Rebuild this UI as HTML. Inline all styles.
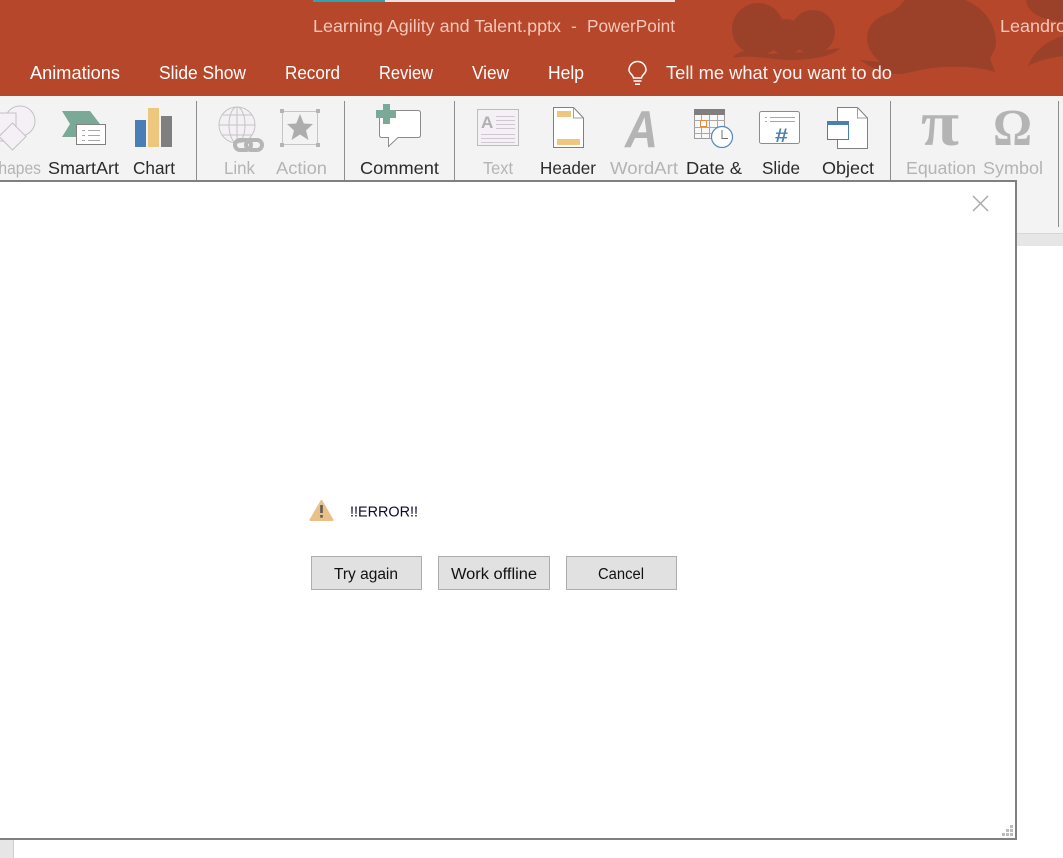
<!DOCTYPE html>
<html><head><meta charset="utf-8"><style>
html,body{margin:0;padding:0;background:#fff;width:1063px;height:858px;overflow:hidden}
svg{display:block;font-family:"Liberation Sans",sans-serif}
.t{font-size:18px;fill:#fff}
.h{font-size:17.5px;fill:#f6c8ba}
.l{font-size:17.5px;fill:#2b2b2b}
.d{font-size:17.5px;fill:#b4b4b4}
.b{font-size:15.5px;fill:#111}
</style></head><body>
<svg width="1063" height="858" viewBox="0 0 1063 858" xmlns="http://www.w3.org/2000/svg">
<rect width="1063" height="858" fill="#fff"/>
<!-- header -->
<rect width="1063" height="96" fill="#b7472a"/>
<g fill="#9b412a">
<circle cx="758" cy="29" r="26"/>
<circle cx="813" cy="32" r="22"/>
<circle cx="786" cy="37" r="18"/>
<path d="M733 58C738 50 748 50 760 53C775 55 790 52 812 52L840 48C835 55 815 60 790 60C770 60 750 54 733 58Z"/>
<path d="M867 38C867 24 878 16 892 12C898 8 902 3 905 0H965C985 8 996 25 996 42C996 50 992 54 990 58L995 72C975 66 950 66 933 68C915 70 905 75 895 74C880 72 868 66 860 60L880 62C872 55 867 47 867 38Z"/>
<path d="M1026 0C1027 12 1040 20 1063 22V0Z"/>
<path d="M1063 36C1045 42 1035 50 1028 66C1040 60 1050 58 1063 56Z"/>
</g>
<rect x="313" y="0" width="72" height="2" fill="#2fa3b3"/>
<rect x="385" y="0" width="290" height="2" fill="#efe3df"/>
<text class="h" x="313" y="32" textLength="248" lengthAdjust="spacingAndGlyphs">Learning Agility and Talent.pptx</text>
<text class="h" x="571" y="32">-</text>
<text class="h" x="587" y="32" textLength="88" lengthAdjust="spacingAndGlyphs">PowerPoint</text>
<text class="h" x="1000" y="32" textLength="66" lengthAdjust="spacingAndGlyphs">Leandro</text>
<text class="t" x="30" y="79" textLength="90" lengthAdjust="spacingAndGlyphs">Animations</text>
<text class="t" x="159" y="79" textLength="87" lengthAdjust="spacingAndGlyphs">Slide Show</text>
<text class="t" x="285" y="79" textLength="55" lengthAdjust="spacingAndGlyphs">Record</text>
<text class="t" x="379" y="79" textLength="54" lengthAdjust="spacingAndGlyphs">Review</text>
<text class="t" x="472" y="79" textLength="37" lengthAdjust="spacingAndGlyphs">View</text>
<text class="t" x="548" y="79" textLength="36" lengthAdjust="spacingAndGlyphs">Help</text>
<text class="t" x="666" y="79" textLength="226" lengthAdjust="spacingAndGlyphs" fill-opacity=".95">Tell me what you want to do</text>
<g fill="none" stroke="#fff" stroke-width="1.500">
<path d="M633.500 78C633 74.500 629 73.500 629 70A8.500 8.500 0 0 1 646 70C646 73.500 642 74.500 641.500 78Z"/>
<path d="M633.500 81H641.500M635 84.200H640"/>
</g>
<!-- ribbon -->
<rect y="96" width="1063" height="137" fill="#f3f3f3"/>
<rect y="233" x="1017" width="46" height="13" fill="#e6e6e6"/>
<rect y="233" x="1017" width="46" height="1" fill="#d8d8d8"/>
<g fill="#8e8e8e">
<rect x="196" y="101" width="1" height="80"/>
<rect x="344" y="101" width="1" height="80"/>
<rect x="454" y="101" width="1" height="80"/>
<rect x="890" y="101" width="1" height="80"/>
<rect x="1058" y="101" width="1" height="126"/>
</g>
<!-- shapes -->
<g fill="#f4f0f5" stroke="#c2c2c2" stroke-width="1">
<circle cx="20" cy="121" r="15"/>
<rect x="-14" y="113" width="30" height="28"/>
<path d="M12.500 123L26 136.500L12.500 150L-1 136.500Z"/>
</g>
<!-- smartart -->
<path d="M62 111H90L100 124V137H62L70 124Z" fill="#7aa998"/>
<rect x="76.500" y="124.500" width="29" height="20" fill="#fff" stroke="#808080"/>
<path d="M82 130.500H85M88 130.500H100M82 135.500H85M88 135.500H100M82 140.500H85M88 140.500H100" stroke="#a8a8a8"/>
<!-- chart -->
<rect x="135" y="120" width="11" height="27" fill="#4a7eb5"/>
<rect x="148" y="108" width="11" height="39" fill="#eec77f"/>
<rect x="161" y="116" width="11" height="31" fill="#7f7f7f"/>
<!-- link -->
<g fill="none" stroke="#c4c4c4" stroke-width="1">
<circle cx="237" cy="125" r="18" fill="#f4f0f5"/>
<ellipse cx="237" cy="125" rx="8" ry="18"/>
<path d="M219 125H255M222 115H252M222 135H252M237 107V143"/>
</g>
<g fill="none" stroke="#b5b5b5" stroke-width="4">
<rect x="235" y="140" width="16" height="10" rx="5"/>
<rect x="246" y="140" width="16" height="10" rx="5"/>
</g>
<!-- action -->
<rect x="282.500" y="111.500" width="35" height="33" fill="none" stroke="#c6c6c6"/>
<g fill="#b4b4b4"><rect x="280" y="109" width="4" height="4"/><rect x="316" y="109" width="4" height="4"/><rect x="280" y="143" width="4" height="4"/><rect x="316" y="143" width="4" height="4"/></g>
<path d="M300 114L303.800 123.500L313 124L306 130.500L308.500 140L300 134.500L291.500 140L294 130.500L287 124L296.200 123.500Z" fill="#adadad"/>
<!-- comment -->
<path d="M382 110.500H418Q420.500 110.500 420.500 113V135Q420.500 137.500 418 137.500H398L388.500 146.500V137.500H382Q379.500 137.500 379.500 135V113Q379.500 110.500 382 110.500Z" fill="#fff" stroke="#8a8a8a"/>
<path d="M383 104H390V110H396V118H390V124H383V118H376V110H383Z" fill="#7aa998"/>
<!-- text -->
<rect x="477.500" y="109.500" width="41" height="36" fill="#f4f0f5" stroke="#bcbcbc"/>
<text x="481" y="128" font-size="17" font-weight="bold" fill="#b0b0b0">A</text>
<path d="M496 116.500H515M496 120.500H515M496 124.500H515M496 128.500H515M481 134.500H515M481 138.500H515M481 142.500H515" stroke="#cfc8d0"/>
<!-- header -->
<path d="M553.500 107.500H573.500L583.500 118V147.500H553.500Z" fill="#fff" stroke="#808080"/>
<path d="M573.500 107.500V118H583.500" fill="none" stroke="#a0a0a0"/>
<rect x="557" y="111" width="14" height="6" fill="#eec77f"/>
<rect x="557" y="139" width="23" height="6" fill="#eec77f"/>
<!-- wordart -->
<text x="625" y="147" font-style="italic" font-weight="bold" font-size="52" fill="#b4b4b4" textLength="33" lengthAdjust="spacingAndGlyphs">A</text>
<!-- date -->
<rect x="694.500" y="109.500" width="30" height="29" fill="#f8f8f8" stroke="#9a9a9a"/>
<rect x="694" y="109" width="31" height="6" fill="#7f7f7f"/>
<path d="M694 120.500H725M694 127.500H725M694 133.500H725M701.500 115V139M709.500 115V139M717.500 115V139" stroke="#a8a8a8"/>
<rect x="700.500" y="120.500" width="6" height="6" fill="#fff" stroke="#e8883a"/>
<circle cx="722" cy="137" r="10.500" fill="#fff" stroke="#5288c2" stroke-width="1.200"/>
<path d="M722 130V138.500H728" fill="none" stroke="#707070"/>
<!-- slide -->
<rect x="759.500" y="111.500" width="40" height="32" rx="2" fill="#fff" stroke="#8c8c8c"/>
<path d="M765 117.500H767M770 117.500H795M765 121.500H767M770 121.500H795" stroke="#a8a8a8"/>
<text x="775" y="142" font-size="19" font-weight="bold" fill="#4a7eb5" textLength="13" lengthAdjust="spacingAndGlyphs">#</text>
<!-- object -->
<path d="M837.500 107.500H857.500L867.500 118V148.500H837.500Z" fill="#fff" stroke="#808080"/>
<path d="M857.500 107.500V118H867.500" fill="none" stroke="#a0a0a0"/>
<rect x="827.500" y="121.500" width="21" height="18" fill="#fff" stroke="#4a7eb5"/>
<rect x="827" y="121" width="22" height="4" fill="#4a7eb5"/>
<!-- pi omega -->
<text x="921" y="145" font-family="Liberation Serif" font-weight="bold" font-size="65" fill="#b4b4b4" textLength="38" lengthAdjust="spacingAndGlyphs">π</text>
<text x="993" y="145" font-family="Liberation Serif" font-weight="bold" font-size="52" fill="#b4b4b4" textLength="39" lengthAdjust="spacingAndGlyphs">Ω</text>
<!-- ribbon labels -->
<text class="d" x="-12" y="174" textLength="53" lengthAdjust="spacingAndGlyphs">Shapes</text>
<text class="l" x="48" y="174" textLength="71" lengthAdjust="spacingAndGlyphs">SmartArt</text>
<text class="l" x="133" y="174" textLength="42" lengthAdjust="spacingAndGlyphs">Chart</text>
<text class="d" x="224" y="174" textLength="31" lengthAdjust="spacingAndGlyphs">Link</text>
<text class="d" x="276" y="174" textLength="51" lengthAdjust="spacingAndGlyphs">Action</text>
<text class="l" x="360" y="174" textLength="79" lengthAdjust="spacingAndGlyphs">Comment</text>
<text class="d" x="483" y="174" textLength="30" lengthAdjust="spacingAndGlyphs">Text</text>
<text class="l" x="540" y="174" textLength="56" lengthAdjust="spacingAndGlyphs">Header</text>
<text class="d" x="610" y="174" textLength="68" lengthAdjust="spacingAndGlyphs">WordArt</text>
<text class="l" x="686" y="174" textLength="56" lengthAdjust="spacingAndGlyphs">Date &amp;</text>
<text class="l" x="762" y="174" textLength="38" lengthAdjust="spacingAndGlyphs">Slide</text>
<text class="l" x="822" y="174" textLength="52" lengthAdjust="spacingAndGlyphs">Object</text>
<text class="d" x="906" y="174" textLength="70" lengthAdjust="spacingAndGlyphs">Equation</text>
<text class="d" x="983" y="174" textLength="60" lengthAdjust="spacingAndGlyphs">Symbol</text>
<!-- bottom-left strip -->
<rect x="0" y="840" width="13" height="18" fill="#e6e6e6"/>
<rect x="13" y="840" width="1" height="18" fill="#cfcfcf"/>
<!-- dialog -->
<rect x="-4" y="181" width="1020" height="658" fill="#fff" stroke="#808080" stroke-width="2"/>
<path d="M973 196L988 211M988 196L973 211" stroke="#a8a8a8" stroke-width="1.400" fill="none"/>
<path d="M321.500 501L332.500 520H310.500Z" fill="#e8c088" stroke="#e8c088" stroke-width="2" stroke-linejoin="round"/>
<rect x="320.200" y="505" width="2.600" height="8" fill="#5a5a5a"/>
<rect x="320.200" y="515" width="2.600" height="2.600" fill="#5a5a5a"/>
<text x="350" y="516.500" font-size="15" fill="#0a0a2a" textLength="68" lengthAdjust="spacingAndGlyphs">!!ERROR!!</text>
<g fill="#e1e1e1" stroke="#adadad">
<rect x="311.500" y="556.500" width="110" height="33"/>
<rect x="438.500" y="556.500" width="111" height="33"/>
<rect x="566.500" y="556.500" width="110" height="33"/>
</g>
<text class="b" x="334" y="579" textLength="64" lengthAdjust="spacingAndGlyphs">Try again</text>
<text class="b" x="451" y="579" textLength="86" lengthAdjust="spacingAndGlyphs">Work offline</text>
<text class="b" x="598" y="579" textLength="46" lengthAdjust="spacingAndGlyphs">Cancel</text>
<g fill="#bcbcbc">
<rect x="1010" y="825" width="3" height="3"/>
<rect x="1006" y="829" width="3" height="3"/><rect x="1010" y="829" width="3" height="3"/>
<rect x="1002" y="833" width="3" height="3"/><rect x="1006" y="833" width="3" height="3"/><rect x="1010" y="833" width="3" height="3"/>
</g>
</svg>
</body></html>
